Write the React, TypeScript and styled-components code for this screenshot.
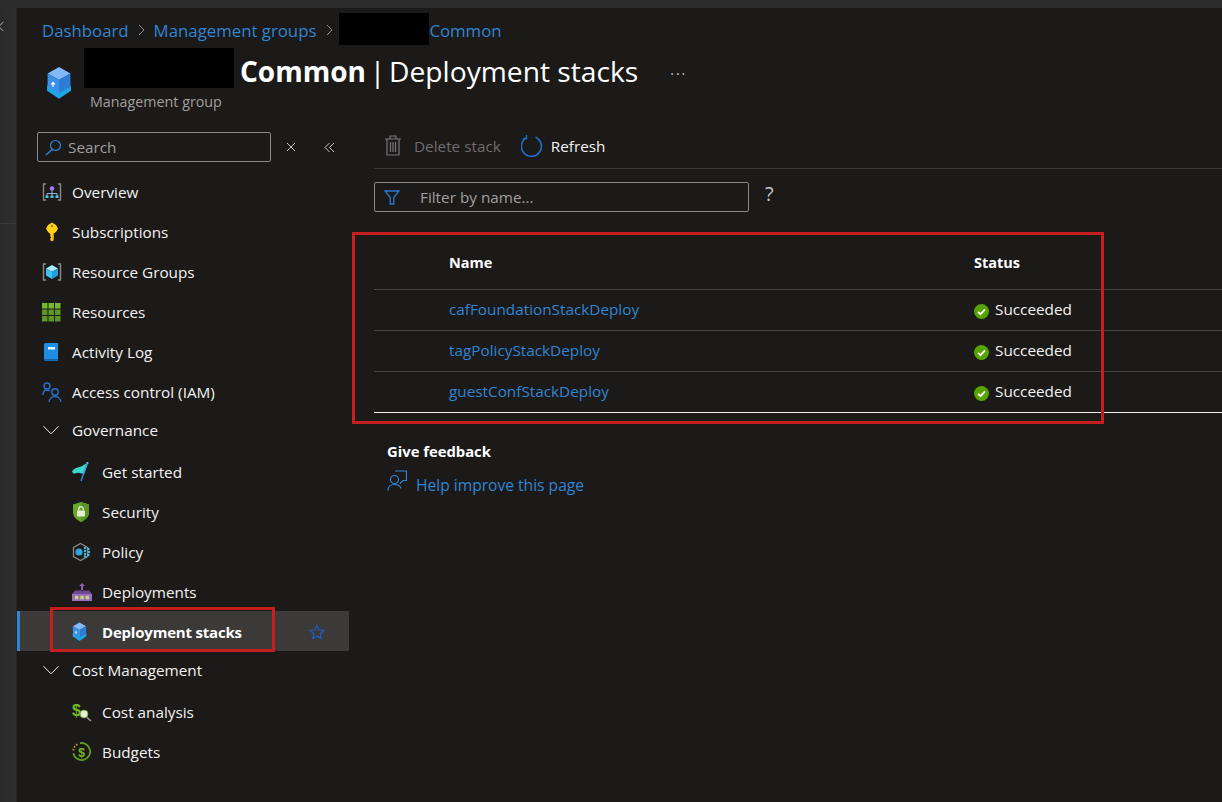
import React from 'react';
import styled, { createGlobalStyle } from 'styled-components';

const GlobalStyle = createGlobalStyle`
  html, body {
    margin: 0;
    padding: 0;
    background: #1b1a19;
    overflow: hidden;
  }
  * {
    box-sizing: border-box;
  }
`;

const Page = styled.div`
  width: 1222px;
  height: 802px;
  display: flex;
  flex-direction: column;
  position: relative;
  overflow: hidden;
  background: #1b1a19;
  color: #f3f2f1;
  font-family: 'Open Sans', 'Noto Sans', 'Liberation Sans', sans-serif;
  font-size: 15.3px;
`;

const TopBar = styled.div`
  height: 8px;
  flex: none;
  background: #2c2c2c;
`;

const Shell = styled.div`
  flex: 1;
  display: flex;
  min-height: 0;
`;

const Strip = styled.div`
  width: 17px;
  flex: none;
  background: linear-gradient(90deg, #2a2a2a, #2e2e2e);
  padding-top: 13px;
  color: #b0b0b0;
  border-right: 1px solid #262626;
  svg {
    display: block;
    margin-left: -4px;
  }
`;

const StripRule = styled.div`
  height: 1px;
  margin-top: 191px;
  background: #3a3a3a;
`;

const Blade = styled.div`
  flex: 1;
  display: flex;
  flex-direction: column;
  min-width: 0;
`;

const Header = styled.div`
  height: 117px;
  flex: none;
  padding: 4px 0 0 25px;
`;

const Crumbs = styled.div`
  display: flex;
  align-items: center;
  height: 36px;
  font-size: 16.8px;
  color: #2f85d3;
`;

const CrumbSep = styled.span<{ $tight?: boolean }>`
  display: inline-flex;
  margin: ${p => (p.$tight ? '0 4px 0 7px' : '0 7px 0 6px')};
  color: #8a8886;
`;

const Redact = styled.span<{ $w: number; $h: number; $lift?: number }>`
  display: block;
  flex: none;
  width: ${p => p.$w}px;
  height: ${p => p.$h}px;
  margin-top: ${p => -(p.$lift ?? 0)}px;
  background: #000;
`;

const TitleRow = styled.div`
  display: flex;
`;

const LogoSlot = styled.div`
  width: 42px;
  flex: none;
  padding: 18px 0 0 4px;
`;

const TitleBlock = styled.div`
  display: flex;
  flex-direction: column;
`;

const TitleLine = styled.div`
  display: flex;
  align-items: center;
  height: 40px;
`;

const Title = styled.h1`
  margin: 6px 0 0 6px;
  font-size: 28.2px;
  font-weight: 400;
  color: #fff;
  white-space: nowrap;
  strong {
    font-size: 28px;
    font-weight: 700;
  }
`;

const Pipe = styled.span`
  word-spacing: -3.5px;
`;

const More = styled.span`
  margin: 10px 0 0 32px;
  color: #c8c6c4;
  font-size: 14px;
  letter-spacing: 2px;
`;

const Subtitle = styled.div`
  margin: 4px 0 0 6px;
  font-size: 14.3px;
  color: #a19f9d;
`;

const Body = styled.div`
  flex: 1;
  display: flex;
  min-height: 0;
`;

const Sidebar = styled.div`
  width: 332px;
  flex: none;
`;

const SearchRow = styled.div`
  display: flex;
  align-items: center;
  height: 30px;
  margin: 7px 0 9px 20px;
`;

const SearchBox = styled.div`
  width: 234px;
  height: 30px;
  display: flex;
  align-items: center;
  gap: 6px;
  padding-left: 7px;
  border: 1px solid #8a8886;
  border-radius: 2px;
  color: #a19f9d;
`;

const GhostIcon = styled.span<{ $ml: number }>`
  display: inline-flex;
  margin-left: ${p => p.$ml}px;
  color: #c8c6c4;
`;

const NavRow = styled.div<{ $indent?: boolean; $active?: boolean }>`
  height: 40px;
  display: flex;
  align-items: center;
  padding-top: 2px;
  padding-left: ${p => (p.$active ? 52 : p.$indent ? 55 : 25)}px;
  background: ${p => (p.$active ? '#3b3a39' : 'transparent')};
  border-left: ${p => (p.$active ? '3px solid #2f85d3' : 'none')};
  font-size: ${p => (p.$active ? 15 : 15.3)}px;
  font-weight: ${p => (p.$active ? 700 : 400)};
  letter-spacing: ${p => (p.$active ? '-0.2px' : '0')};
  color: ${p => (p.$active ? '#fff' : '#f3f2f1')};
`;

const NavGroup = styled.div`
  height: 36px;
  margin-bottom: 4px;
  display: flex;
  align-items: center;
  padding-top: 2px;
  padding-left: 25px;
  color: #f3f2f1;
`;

const NavIcon = styled.span`
  width: 30px;
  flex: none;
  display: inline-flex;
  align-items: center;
`;

const FavStar = styled.span`
  margin-left: auto;
  margin-right: 24px;
  display: inline-flex;
  color: #1f5fc4;
`;

const Content = styled.div`
  flex: 1;
  min-width: 0;
  padding-left: 25px;
`;

const Toolbar = styled.div`
  height: 44px;
  display: flex;
  align-items: center;
  padding: 0 0 2px 11px;
  border-bottom: 1px solid #3b3a39;
`;

const ToolButton = styled.div<{ $off?: boolean; $gap: number }>`
  display: flex;
  align-items: center;
  gap: ${p => p.$gap}px;
  margin-right: 20px;
  color: ${p => (p.$off ? '#6f6d6b' : '#f3f2f1')};
`;

const FilterRow = styled.div`
  display: flex;
  align-items: center;
  margin-top: 13px;
`;

const FilterBox = styled.div`
  width: 375px;
  height: 30px;
  display: flex;
  align-items: center;
  gap: 20px;
  padding-left: 9px;
  border: 1px solid #8a8886;
  border-radius: 2px;
  color: #a19f9d;
`;

const Help = styled.span`
  margin: -8px 0 0 16px;
  font-size: 20px;
  color: #c8c6c4;
`;

const Table = styled.div`
  margin-top: 20px;
  border-bottom: 1px solid #f3f2f1;
`;

const Row = styled.div<{ $head?: boolean }>`
  display: grid;
  grid-template-columns: 75px 525px 1fr;
  align-items: center;
  height: ${p => (p.$head ? 57 : 41)}px;
  ${p => (p.$head ? 'padding-top: 4px;' : 'border-top: 1px solid #484644; padding-bottom: 2px;')}
`;

const HeadCell = styled.div`
  font-weight: 700;
  font-size: 14.5px;
  color: #fff;
`;

const LinkCell = styled.a`
  color: #2f85d3;
`;

const StatusCell = styled.div`
  display: flex;
  align-items: center;
  gap: 6px;
  color: #f3f2f1;
  svg {
    margin-top: 4px;
  }
`;

const Feedback = styled.div`
  padding: 28px 0 0 13px;
`;

const FeedbackTitle = styled.div`
  font-weight: 700;
  font-size: 14.8px;
  color: #fff;
`;

const FeedbackLink = styled.div`
  display: flex;
  align-items: center;
  gap: 9px;
  margin-top: 13px;
  font-size: 15.6px;
  color: #2f85d3;
  svg {
    margin-top: -8px;
  }
`;

const Callout = styled.div<{ $x: number; $y: number; $w: number; $h: number }>`
  position: absolute;
  left: ${p => p.$x}px;
  top: ${p => p.$y}px;
  width: ${p => p.$w}px;
  height: ${p => p.$h}px;
  border: 3px solid #c41e1e;
  pointer-events: none;
`;

const Chevron = ({ dir, size = 12 }: { dir: 'right' | 'left' | 'down'; size?: number }) => {
  const d = dir === 'right' ? 'M4 1l5 5-5 5' : dir === 'left' ? 'M8 1L3 6l5 5' : 'M1 3.5l5 5 5-5';
  return (
    <svg width={size} height={size} viewBox="0 0 12 12" fill="none" stroke="currentColor" strokeWidth="1">
      <path d={d} vectorEffect="non-scaling-stroke" />
    </svg>
  );
};

const StackCube = ({ size }: { size: number }) => (
  <svg width={size} height={size * 1.3} viewBox="0 0 26 34">
    <path d="M1 20l12 7 12-7v5l-12 8-12-8z" fill="#1ea7e6" />
    <path d="M1 20l12-6 12 6-12 7z" fill="#50e6ff" />
    <path d="M1.500 7.500L13 1l11.500 6.500L13 14z" fill="#83b9f9" />
    <path d="M1.500 7.500L13 14v13.500L1.500 21z" fill="#3a8fe8" />
    <path d="M13 14l11.500-6.500V21L13 27.500z" fill="#2d7cd6" />
    <path d="M7 21v-4M5.200 18.500L7 16.500l1.800 2" stroke="#fff" strokeWidth="1.300" fill="none" />
  </svg>
);

const Bracket = ({ children }: { children: React.ReactNode }) => (
  <svg width="20" height="20" viewBox="0 0 20 20">
    <path d="M4 2H1.500v16H4M16 2h2.500v16H16" fill="none" stroke="#8a8886" strokeWidth="1.400" />
    {children}
  </svg>
);

const OverviewIcon = () => (
  <Bracket>
    <circle cx="10" cy="6.500" r="2.300" fill="#a67af4" />
    <path d="M10 8.500v3M5 14v-2.500h10V14M10 11.500V14" stroke="#8fb4d9" strokeWidth="1" fill="none" />
    <rect x="3.500" y="13.500" width="3" height="2.500" fill="#50c8d8" />
    <rect x="8.500" y="13.500" width="3" height="2.500" fill="#50c8d8" />
    <rect x="13.500" y="13.500" width="3" height="2.500" fill="#50c8d8" />
  </Bracket>
);

const KeyIcon = () => (
  <svg width="20" height="20" viewBox="0 0 20 20">
    <path d="M10 0.500l4 2.500 2 3.500-2 3.500-2.300 1.500V18l-1.700 1.500L8.300 18v-1.500l1-1-1-1v-2.500L6 10 4 6.500 6 3z" fill="#fcd116" />
    <circle cx="10" cy="4" r="1.100" fill="#8a6d00" />
    <path d="M10.700 12v7l1-1V11.500z" fill="#c89a00" />
  </svg>
);

const GroupIcon = () => (
  <Bracket>
    <path d="M4 6.400L10 3l6 3.400L10 9.800z" fill="#a6e9fb" />
    <path d="M4 6.400l6 3.400V17l-6-3.400z" fill="#3fc1ee" />
    <path d="M10 9.800V17l6-3.400V6.400z" fill="#1ea0da" />
  </Bracket>
);

const GridIcon = () => (
  <svg width="19" height="19" viewBox="0 0 19 19">
    {[0, 6.5, 13].map(y =>
      [0, 6.5, 13].map(x => (
        <rect key={`${x}-${y}`} x={x} y={y} width="5.500" height="5.500" fill={y === 0 ? '#76b82a' : '#5e9624'} />
      ))
    )}
  </svg>
);

const LogIcon = () => (
  <svg width="20" height="20" viewBox="0 0 20 20">
    <path d="M2 2.500A1.500 1.500 0 0 1 3.500 1H16v16.500H3.500A1.500 1.500 0 0 1 2 16z" fill="#1f8fe6" />
    <path d="M2 16a2 2 0 0 0 2 3h12v-1.500H4z" fill="#0f6cbd" />
    <path d="M6 5h7v2.500H6z" fill="#eaf6ff" />
  </svg>
);

const PeopleIcon = () => (
  <svg width="21" height="21" viewBox="0 0 21 21" fill="none" stroke="#2a6fd0" strokeWidth="1.400">
    <circle cx="5" cy="4" r="3" />
    <path d="M1 13c0-3 1.500-5 4-5 1 0 2 .3 3 1" />
    <circle cx="13" cy="10" r="3.200" />
    <path d="M7 20c.3-3.500 3-5.500 6-5.500s5.700 2 6 5.500" />
  </svg>
);

const FlagIcon = () => (
  <svg width="18" height="20" viewBox="0 0 18 20">
    <path d="M0 9.500C3 5 6 6 9 4.500S13 2 16 1l-3.500 10.500C10 12.500 7 10 4.500 11S1.500 12 0 9.500z" fill="#3fd8c8" />
    <path d="M15.500 0.500L9 19" stroke="#3a8fe0" strokeWidth="1.300" />
    <circle cx="15.500" cy="1" r="1.100" fill="#70b0ee" />
  </svg>
);

const ShieldIcon = () => (
  <svg width="18" height="20" viewBox="0 0 18 20">
    <path d="M9 0l8 2.500v8C17 15 13 18 9 20c-4-2-8-5-8-9.500v-8z" fill="#6aa52c" />
    <path d="M9 0l8 2.500v8C17 15 13 18 9 20z" fill="#5a9424" />
    <rect x="5" y="8.500" width="8" height="6" rx="0.800" fill="#e4eed4" />
    <path d="M6.800 8.500V6.800a2.200 2.200 0 0 1 4.400 0v1.700" fill="none" stroke="#e4eed4" strokeWidth="1.300" />
  </svg>
);

const PolicyIcon = () => (
  <svg width="20" height="20" viewBox="0 0 20 20">
    <path d="M8.500 1.500l7 4v9l-7 4-7-4v-9z" fill="none" stroke="#8a8886" strokeWidth="1.300" />
    <circle cx="7" cy="10" r="3.600" fill="#32a8d8" />
    {[
      [13, 6],
      [16.5, 7],
      [13, 9],
      [17, 10],
      [13, 12],
      [16.5, 13],
      [13, 14.5]
    ].map(([cx, cy]) => (
      <circle key={`${cx}-${cy}`} cx={cx} cy={cy} r="1.200" fill="#3fb8e0" />
    ))}
  </svg>
);

const DeployIcon = () => (
  <svg width="20" height="20" viewBox="0 0 20 20">
    <path d="M10 1L7 4h2v4h2V4h2z" fill="#8e5bb5" />
    <path d="M3 8.500h14L20 12H0z" fill="#6c4a8f" />
    <rect x="0" y="12" width="20" height="7" fill="#9a6cc4" />
    <rect x="3" y="13.800" width="3.400" height="3.400" fill="#c6d66a" />
    <rect x="8.300" y="13.800" width="3.400" height="3.400" fill="#c6d66a" />
    <rect x="13.600" y="13.800" width="3.400" height="3.400" fill="#c6d66a" />
  </svg>
);

const CostIcon = () => (
  <svg width="20" height="20" viewBox="0 0 20 20">
    <text x="0" y="14" fontSize="16" fontWeight="700" fill="#76b82a" fontFamily="Liberation Sans">$</text>
    <circle cx="12" cy="12" r="4" fill="#e8efd8" stroke="#5e9624" strokeWidth="0.800" />
    <path d="M15 15.500l4 3.500" stroke="#a19f9d" strokeWidth="1.600" />
  </svg>
);

const BudgetIcon = () => (
  <svg width="20" height="20" viewBox="0 0 20 20" fill="none">
    <path d="M8 1.200a8.500 8.500 0 1 1-6.700 10" stroke="#5e9e24" strokeWidth="1.800" />
    <path d="M1.200 8.500A8.500 8.500 0 0 1 6 2" stroke="#d98a1f" strokeWidth="1.800" strokeDasharray="1.600 1.400" />
    <text x="6.300" y="14.500" fontSize="12" fontWeight="700" fill="#76b82a" fontFamily="Liberation Sans">$</text>
  </svg>
);

const StatusIcon = () => (
  <svg width="15" height="15" viewBox="0 0 15 15">
    <circle cx="7.500" cy="7.500" r="7.500" fill="#57a300" />
    <path d="M4 7.800l2.500 2.400L11 5.400" fill="none" stroke="#fff" strokeWidth="1.800" />
  </svg>
);

const stacks = ['cafFoundationStackDeploy', 'tagPolicyStackDeploy', 'guestConfStackDeploy'];

export default function App() {
  return (
    <Page>
      <GlobalStyle />
      <TopBar />
      <Shell>
        <Strip>
          <Chevron dir="left" size={11} />
          <StripRule />
        </Strip>
        <Blade>
          <Header>
            <Crumbs>
              <span>Dashboard</span>
              <CrumbSep>
                <Chevron dir="right" />
              </CrumbSep>
              <span>Management groups</span>
              <CrumbSep $tight>
                <Chevron dir="right" />
              </CrumbSep>
              <Redact $w={90} $h={32} $lift={2} />
              <span>Common</span>
            </Crumbs>
            <TitleRow>
              <LogoSlot>
                <StackCube size={26} />
              </LogoSlot>
              <TitleBlock>
                <TitleLine>
                  <Redact $w={150} $h={40} />
                  <Title>
                    <strong>Common</strong>
                    <Pipe> | </Pipe>Deployment stacks
                  </Title>
                  <More>···</More>
                </TitleLine>
                <Subtitle>Management group</Subtitle>
              </TitleBlock>
            </TitleRow>
          </Header>
          <Body>
            <Sidebar>
              <SearchRow>
                <SearchBox>
                  <svg width="17" height="17" viewBox="0 0 17 17" fill="none">
                    <circle cx="10.500" cy="6.500" r="5" stroke="#2f85d3" strokeWidth="1.200" />
                    <path d="M7 10.500L1 16" stroke="#2f85d3" strokeWidth="1.400" />
                  </svg>
                  Search
                </SearchBox>
                <GhostIcon $ml={15}>
                  <svg width="10" height="10" viewBox="0 0 10 10" stroke="currentColor" strokeWidth="1" fill="none">
                    <path d="M1 1l8 8M9 1L1 9" />
                  </svg>
                </GhostIcon>
                <GhostIcon $ml={28}>
                  <svg width="11" height="11" viewBox="0 0 11 11" stroke="currentColor" strokeWidth="1" fill="none">
                    <path d="M5.500 1L1 5.500 5.500 10M10 1L5.500 5.500 10 10" />
                  </svg>
                </GhostIcon>
              </SearchRow>
              <NavRow><NavIcon><OverviewIcon /></NavIcon>Overview</NavRow>
              <NavRow><NavIcon><KeyIcon /></NavIcon>Subscriptions</NavRow>
              <NavRow><NavIcon><GroupIcon /></NavIcon>Resource Groups</NavRow>
              <NavRow><NavIcon><GridIcon /></NavIcon>Resources</NavRow>
              <NavRow><NavIcon><LogIcon /></NavIcon>Activity Log</NavRow>
              <NavRow><NavIcon><PeopleIcon /></NavIcon>Access control (IAM)</NavRow>
              <NavGroup><NavIcon><Chevron dir="down" size={18} /></NavIcon>Governance</NavGroup>
              <NavRow $indent><NavIcon><FlagIcon /></NavIcon>Get started</NavRow>
              <NavRow $indent><NavIcon><ShieldIcon /></NavIcon>Security</NavRow>
              <NavRow $indent><NavIcon><PolicyIcon /></NavIcon>Policy</NavRow>
              <NavRow $indent><NavIcon><DeployIcon /></NavIcon>Deployments</NavRow>
              <NavRow $indent $active>
                <NavIcon><StackCube size={15} /></NavIcon>
                Deployment stacks
                <FavStar>
                  <svg width="16" height="16" viewBox="0 0 16 16" fill="none" stroke="currentColor" strokeWidth="1.200">
                    <path d="M8 1.500l2 4.500 4.800.5-3.600 3.200 1 4.800L8 12l-4.200 2.500 1-4.800L1.200 6.500 6 6z" />
                  </svg>
                </FavStar>
              </NavRow>
              <NavGroup><NavIcon><Chevron dir="down" size={18} /></NavIcon>Cost Management</NavGroup>
              <NavRow $indent><NavIcon><CostIcon /></NavIcon>Cost analysis</NavRow>
              <NavRow $indent><NavIcon><BudgetIcon /></NavIcon>Budgets</NavRow>
            </Sidebar>
            <Content>
              <Toolbar>
                <ToolButton $off $gap={13}>
                  <svg width="16" height="21" viewBox="0 0 16 21" fill="none" stroke="#77757a" strokeWidth="1.200">
                    <path d="M0 4h16M5 4V1h6v3M2 4v16h12V4M5.500 7v10M8 7v10M10.500 7v10" />
                  </svg>
                  Delete stack
                </ToolButton>
                <ToolButton $gap={8}>
                  <svg width="22" height="22" viewBox="0 0 22 22" fill="none" stroke="#1f70c8" strokeWidth="1.600">
                    <path d="M14.500 2.200A10 10 0 1 1 5.500 2.600" />
                    <path d="M5.500 0v3.600H1.800" strokeWidth="1.300" />
                  </svg>
                  Refresh
                </ToolButton>
              </Toolbar>
              <FilterRow>
                <FilterBox>
                  <svg width="16" height="15" viewBox="0 0 16 15" fill="none" stroke="#2a78d0" strokeWidth="1.300">
                    <path d="M1 1h14L9.800 7.500V14H6.200V7.500z" />
                  </svg>
                  Filter by name...
                </FilterBox>
                <Help>?</Help>
              </FilterRow>
              <Table>
                <Row $head>
                  <span />
                  <HeadCell>Name</HeadCell>
                  <HeadCell>Status</HeadCell>
                </Row>
                {stacks.map(name => (
                  <Row key={name}>
                    <span />
                    <LinkCell>{name}</LinkCell>
                    <StatusCell>
                      <StatusIcon />
                      Succeeded
                    </StatusCell>
                  </Row>
                ))}
              </Table>
              <Feedback>
                <FeedbackTitle>Give feedback</FeedbackTitle>
                <FeedbackLink>
                  <svg width="20" height="22" viewBox="0 0 20 22" fill="none" stroke="#2f85d3" strokeWidth="1.200">
                    <circle cx="7.500" cy="9.500" r="4" />
                    <path d="M1 20.500c0-4 3-6 6.500-6s6 2 6.500 4M8 1h11.500v9.500H16l-3 3" />
                  </svg>
                  Help improve this page
                </FeedbackLink>
              </Feedback>
            </Content>
          </Body>
        </Blade>
      </Shell>
      <Callout $x={352} $y={232} $w={752} $h={192} />
      <Callout $x={50} $y={607} $w={225} $h={45} />
    </Page>
  );
}
